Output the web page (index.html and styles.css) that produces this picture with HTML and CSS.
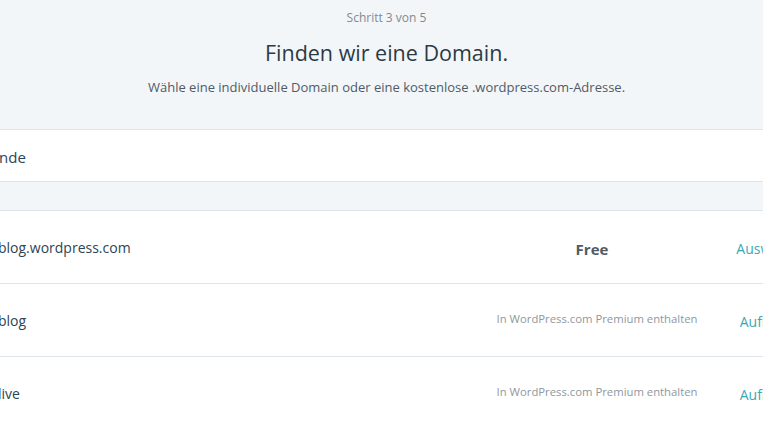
FILE: index.html
```html
<!DOCTYPE html>
<html lang="de">
<head>
<meta charset="utf-8">
<title>Finden wir eine Domain.</title>
<link rel="stylesheet" href="styles.css">
</head>
<body>
<header class="intro">
  <div class="step">Schritt 3 von 5</div>
  <h1 class="title">Finden wir eine Domain.</h1>
  <p class="subtitle">Wähle eine individuelle Domain oder eine kostenlose .wordpress.com-Adresse.</p>
</header>
<div class="search">
  <span class="search-text">nde</span>
</div>
<div class="band"></div>
<ul class="results">
  <li class="row">
    <span class="name">blog.wordpress.com</span>
    <span class="price price-free">Free</span>
    <span class="action">Auswählen</span>
  </li>
  <li class="row">
    <span class="name">blog</span>
    <span class="price price-note">In WordPress.com Premium enthalten</span>
    <span class="action">Aufrüsten</span>
  </li>
  <li class="row">
    <span class="name">live</span>
    <span class="price price-note">In WordPress.com Premium enthalten</span>
    <span class="action">Aufrüsten</span>
  </li>
</ul>
</body>
</html>
```
FILE: styles.css
```css
html, body {
  margin: 0;
  padding: 0;
}
body {
  width: 763px;
  height: 429px;
  overflow: hidden;
  background: #ffffff;
  font-family: "Open Sans", "Noto Sans", "Liberation Sans", sans-serif;
  color: #2e4453;
}
.intro {
  background: #f3f6f8;
  text-align: center;
  padding-top: 10px;
  padding-left: 10px;
  height: 119px;
  border-bottom: 1px solid #dfe5ea;
}
.step {
  font-size: 12px;
  line-height: 16px;
  color: #7f8a93;
}
.title {
  margin: 12px 0 0;
  font-size: 21.5px;
  line-height: 30px;
  font-weight: 400;
  color: #2b3a44;
}
.subtitle {
  margin: 10px 0 0;
  font-size: 13px;
  line-height: 18px;
  color: #4f5b66;
}
.search {
  height: 51px;
  display: flex;
  align-items: center;
  border-bottom: 1px solid #dfe5ea;
  font-size: 15px;
  color: #2e4453;
}
.search-text {
  margin-left: -1px;
  padding-top: 3px;
}
.band {
  height: 28px;
  background: #f3f6f8;
  border-bottom: 1px solid #dfe5ea;
}
.results {
  list-style: none;
  margin: 0;
  padding: 0;
}
.row {
  height: 72px;
  display: flex;
  align-items: center;
  border-bottom: 1px solid #dfe5ea;
}
.name {
  flex: 1;
  margin-left: -2px;
  font-size: 14px;
  color: #2e4453;
}
.price {
  width: 240px;
  text-align: center;
}
.price-free {
  font-size: 15px;
  font-weight: 700;
  color: #4f5b66;
  padding-top: 3px;
  padding-right: 10px;
}
.price-note {
  font-size: 11.3px;
  color: #8f979e;
  padding-bottom: 4px;
  padding-right: 5px;
}
.action {
  width: 100px;
  margin-right: -59px;
  text-align: center;
  font-size: 14px;
  color: #3ba7b6;
  padding-top: 2px;
}
```
